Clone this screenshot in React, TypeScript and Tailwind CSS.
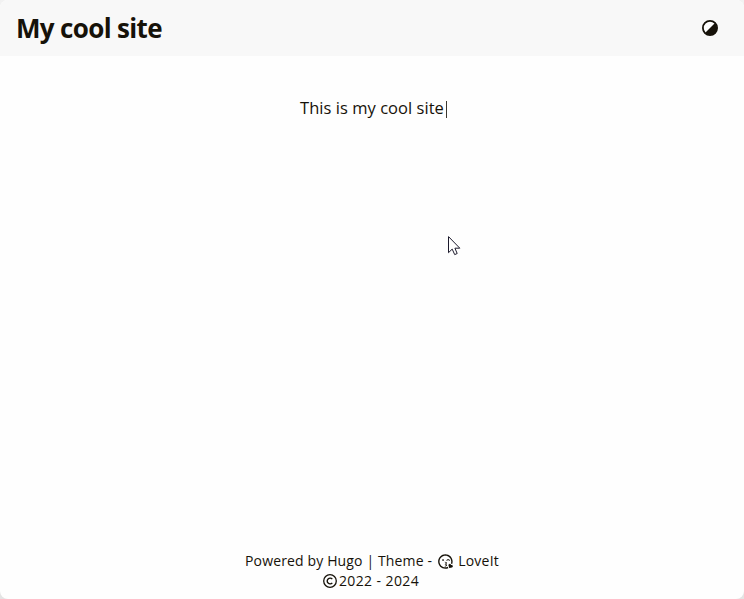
import { FaRegKissWinkHeart } from "react-icons/fa";

function ContrastIcon() {
  return (
    <svg viewBox="0 0 16 16" className="size-4" aria-label="Switch theme">
      <circle cx="8" cy="8" r="7.1" fill="#fff" stroke="#161209" strokeWidth="1.8" />
      <path d="M13 3A7.07 7.07 0 0 1 3 13Z" fill="#161209" />
    </svg>
  );
}

function CopyrightIcon() {
  return (
    <svg viewBox="0 0 14 14" className="mr-0.5 size-[14px]" fill="none" stroke="#161209">
      <circle cx="7" cy="7" r="6.3" strokeWidth="1.3" />
      <path d="M9.3 5.1A2.9 2.9 0 1 0 9.3 8.9" strokeWidth="1.4" />
    </svg>
  );
}

function Pointer() {
  return (
    <svg viewBox="0 0 13 20" className="absolute left-[448px] top-[236px] h-5 w-[13px]">
      <path
        d="M.5.6V16.7L4.2 13.1L6.7 18.6L9.2 17.5L6.9 12.2H11.8Z"
        fill="#fff"
        stroke="#1c1a2c"
        strokeWidth="1"
      />
    </svg>
  );
}

export default function App() {
  return (
    <div className="h-[599px] w-[744px] overflow-hidden bg-linear-to-b from-[#f2f2f2] to-[#e4e4e4]">
      <div className="relative flex h-full flex-col overflow-hidden rounded-[8px] bg-[#fefefe] font-['Open_Sans','Noto_Sans',sans-serif] text-[#161209]">
        <header className="flex h-14 shrink-0 items-center justify-between bg-[#f8f8f8] pl-4 pr-[26px]">
          <h1 className="whitespace-nowrap text-[26px] font-bold leading-9 tracking-[-0.66px]">My cool site</h1>
          <ContrastIcon />
        </header>
        <main className="flex flex-1 justify-center pl-[3px] pt-10">
          <p className="flex h-6 items-center whitespace-nowrap text-[16.5px] leading-6 tracking-[0.04px]">
            This is my cool site
            <span className="ml-0.5 h-[17px] w-px translate-y-px bg-[#3a372f]" />
          </p>
        </main>
        <footer className="flex flex-col items-center pb-2 text-sm leading-5">
          <div className="flex items-center whitespace-pre">
            <span className="tracking-[0.14px]">Powered by Hugo | Theme - </span>
            <FaRegKissWinkHeart className="ml-0.5 mr-[1.5px] size-[15px]" />
            <span className="tracking-[0.2px]"> LoveIt</span>
          </div>
          <div className="mr-0.5 flex items-center">
            <CopyrightIcon />
            <span className="tracking-[0.4px]">2022 - 2024</span>
          </div>
        </footer>
        <Pointer />
      </div>
    </div>
  );
}
